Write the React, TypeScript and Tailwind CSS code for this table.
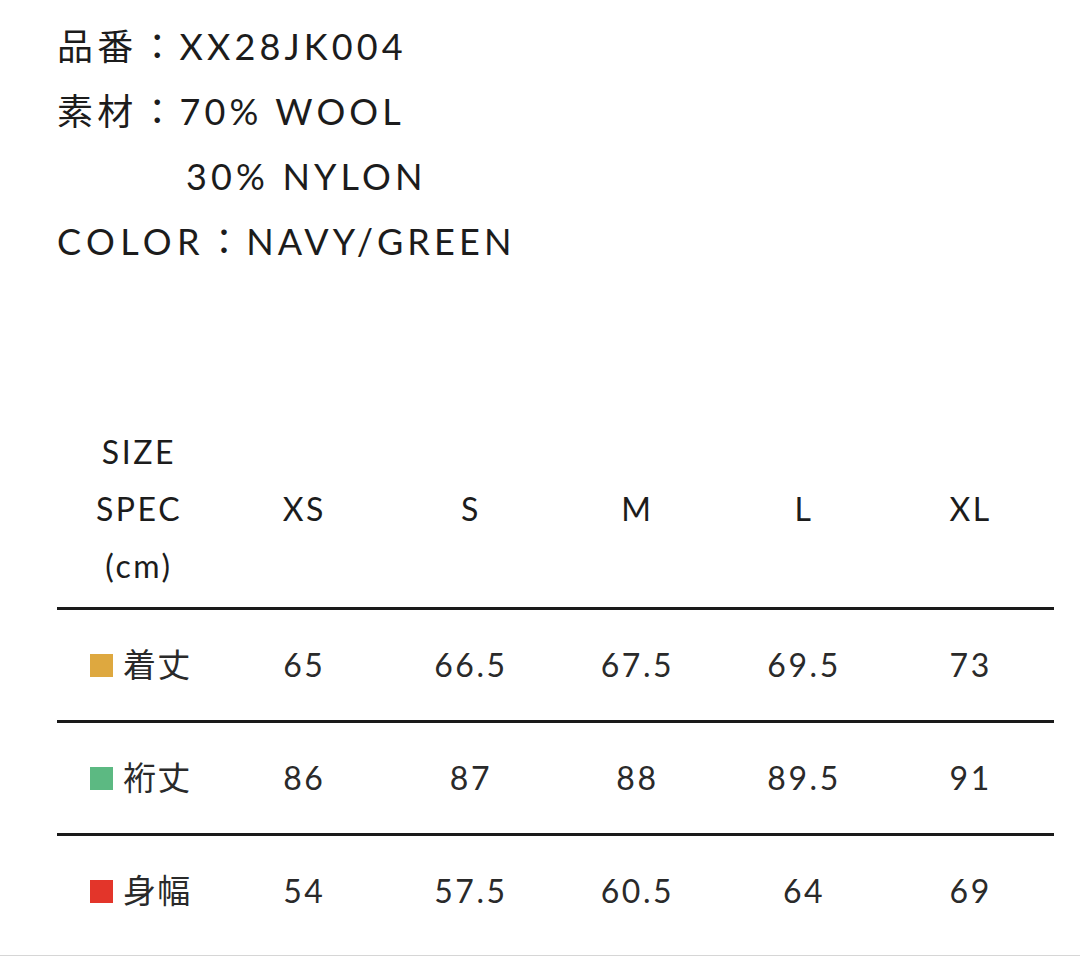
import React from 'react';

const sizes = ['XS', 'S', 'M', 'L', 'XL'];

const rows = [
  { label: '着丈', color: 'bg-[#dea83f]', values: ['65', '66.5', '67.5', '69.5', '73'] },
  { label: '裄丈', color: 'bg-[#5cb982]', values: ['86', '87', '88', '89.5', '91'] },
  { label: '身幅', color: 'bg-[#e3352a]', values: ['54', '57.5', '60.5', '64', '69'] },
];

const App: React.FC = () => {
  return (
    <div className="w-[1080px] h-[957px] bg-white text-[#1c1c1c] font-['Lato','Noto_Sans_CJK_JP',sans-serif] overflow-hidden">
      {/* product info */}
      <div className="pl-[57px] pt-[14px] text-[36px] leading-[65px] tracking-[0.115em]">
        <div className="flex">
          <span>品番</span>
          <span className="pl-[2px]">：</span>
          <span>XX28JK004</span>
        </div>
        <div className="flex">
          <span>素材</span>
          <span className="pl-[2px]">：</span>
          <span>70% WOOL</span>
        </div>
        <div className="pl-[129px]">30% NYLON</div>
        <div className="flex">
          <span className="tracking-[0.15em]">COLOR</span>
          <span className="pl-[1px]">：</span>
          <span>NAVY/GREEN</span>
        </div>
      </div>

      {/* size table */}
      <div className="ml-[57px] w-[997px] mt-[149px] text-[32px] tracking-[0.08em]">
        <div className="grid grid-cols-[164px_repeat(5,1fr)] items-center pb-[13px]">
          <div className="flex flex-col items-center leading-[57px]">
            <span>SIZE</span>
            <span>SPEC</span>
            <span>(cm)</span>
          </div>
          {sizes.map(s => (
            <div key={s} className="text-center">{s}</div>
          ))}
        </div>

        {rows.map(row => (
          <div key={row.label} className="border-t-[3px] border-[#1a1a1a]">
            <div className="grid grid-cols-[164px_repeat(5,1fr)] items-center h-[110px]">
              <div className="flex items-center pl-[33px] gap-[10px]">
                <span className={`w-[23px] h-[23px] ${row.color}`}></span>
                <span className="text-[33px] tracking-[0.04em] text-[#2a2a2a]">{row.label}</span>
              </div>
              {row.values.map((v, i) => (
                <div key={i} className="text-center text-[#2a2a2a]">{v}</div>
              ))}
            </div>
          </div>
        ))}
      </div>

      <div className="mt-[9px] border-t border-[#d6d6d6]"></div>
    </div>
  );
};

export default App;
